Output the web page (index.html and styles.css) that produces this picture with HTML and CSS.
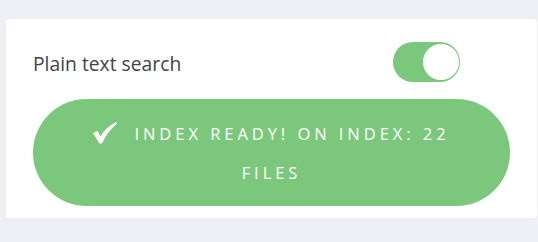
FILE: index.html
```html
<!DOCTYPE html>
<html lang="en">
  <head>
    <meta charset="UTF-8" />
    <meta name="viewport" content="width=device-width, initial-scale=1.0"/>
    <title>Search settings</title>
    <link rel="stylesheet" href="styles.css">
  </head>
  <body>

    <div class="card">
      <!-- Переключатель поиска -->
      <div class="option-row">
        <span class="option-label">Plain text search</span>
        <label class="switch">
          <input type="checkbox" checked />
          <span class="knob"></span>
        </label>
      </div>

      <!-- Статус индекса -->
      <button class="index-status">
        <svg class="check" width="24" height="22" viewBox="0 0 24 22">
          <path d="M0 11 L4.5 9 L7.5 14.5 Q12 6 23 0 L24 1.5 Q14.5 9.5 9 21.5 L6.5 21.5 Z" fill="white"/>
        </svg>Index ready! On index: 22 files
      </button>
    </div>

  </body>
</html>
```

FILE: styles.css
```css
body {
  margin: 0;
  background-color: #eff0f5;
  font-family: "Open Sans", "Lato", sans-serif;
  padding: 19px 1px 24px 6px;
}

.card {
  background-color: white;
  border-radius: 4px;
  padding: 23px 27px 12px 27px;
  display: flex;
  flex-direction: column;
}

.option-row {
  display: flex;
  align-items: center;
  justify-content: space-between;
  padding-right: 50px;
  margin-bottom: 17px;
}

.option-label {
  font-size: 19.3px;
  color: #3f444b;
  padding-top: 3px;
}

.switch {
  position: relative;
  width: 67px;
  height: 40px;
  border-radius: 20px;
  background-color: #7bc87c;
  cursor: pointer;
}

.switch input {
  display: none;
}

.knob {
  position: absolute;
  top: 2px;
  right: 1px;
  width: 36px;
  height: 36px;
  border-radius: 50%;
  background-color: white;
}

.index-status {
  background-color: #7bc87c;
  color: white;
  border: none;
  border-radius: 54px;
  height: 107px;
  padding: 0 48px;
  font-family: inherit;
  font-size: 16.5px;
  line-height: 39px;
  letter-spacing: 3.95px;
  text-transform: uppercase;
  text-align: center;
}

.check {
  margin-right: 17px;
  vertical-align: -4px;
}
```
